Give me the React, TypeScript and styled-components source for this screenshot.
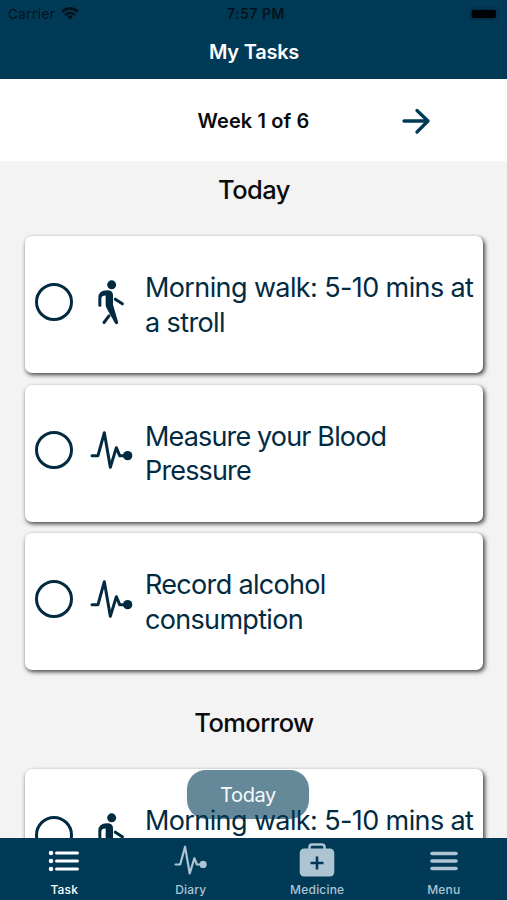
import React from "react";
import styled, { createGlobalStyle } from "styled-components";

const NAVY = "#003a57";
const INK = "#022b42";

const GlobalStyle = createGlobalStyle`
  * { box-sizing: border-box; }
  body {
    margin: 0;
    background: #f3f3f3;
    font-family: Inter, "Liberation Sans", sans-serif;
    font-feature-settings: "calt" 0;
  }
`;

const Screen = styled.div`
  display: flex;
  flex-direction: column;
  position: relative;
  width: 507px;
  height: 900px;
  overflow: hidden;
  background: #f3f3f3;
`;

const Header = styled.header`
  flex: none;
  height: 79px;
  background: ${NAVY};
`;

const StatusBar = styled.div`
  display: grid;
  grid-template-columns: 1fr auto 1fr;
  align-items: center;
  height: 27px;
  padding: 0 6px 0 8px;
  color: #06121b;
  font-size: 13.5px;
`;

const Carrier = styled.div`
  display: flex;
  align-items: center;
  gap: 6px;
  letter-spacing: 0.45px;
`;

const Clock = styled.div`
  font-size: 14px;
  font-weight: 600;
  letter-spacing: 0.5px;
  padding-left: 3px;
`;

const Battery = styled.svg`
  justify-self: end;
`;

const Title = styled.h1`
  margin: 0;
  padding-left: 1px;
  color: #fff;
  font-size: 20px;
  font-weight: 600;
  line-height: 51px;
  letter-spacing: -0.22px;
  text-align: center;
`;

const WeekBar = styled.div`
  flex: none;
  display: grid;
  grid-template-columns: 1fr auto 1fr;
  align-items: center;
  height: 82px;
  background: #fff;
`;

const WeekLabel = styled.div`
  grid-column: 2;
  padding-top: 1px;
  color: #0b0b0b;
  font-size: 20px;
  font-weight: 600;
  letter-spacing: 0.12px;
`;

const NextButton = styled.button`
  justify-self: start;
  display: flex;
  margin: 1px 0 0 91px;
  padding: 0;
  border: 0;
  background: none;
`;

const TaskArea = styled.main`
  flex: 1;
  min-height: 0;
  overflow: hidden;
  padding: 0 24px 0 25px;
`;

const DayTitle = styled.h2<{ $height: number; $line: number }>`
  height: ${(p) => p.$height}px;
  margin: 0;
  color: #0b0b0b;
  font-size: 25.5px;
  font-weight: 500;
  line-height: ${(p) => p.$line}px;
  letter-spacing: -0.55px;
  text-align: center;
`;

const CardList = styled.div`
  display: flex;
  flex-direction: column;
  gap: 11.5px;
`;

const Card = styled.article`
  display: flex;
  align-items: center;
  height: 137px;
  padding-left: 10px;
  border-radius: 7px;
  background: #fff;
  box-shadow: 1.5px 2px 4px rgba(0, 0, 0, 0.72);
`;

const Check = styled.span`
  flex: none;
  width: 38px;
  height: 38px;
  margin-bottom: 6px;
  border: 3px solid ${INK};
  border-radius: 50%;
`;

const TaskIcon = styled.svg`
  flex: none;
  margin: 0 11px 6px 17px;
`;

const TaskText = styled.p<{ $tracking: number }>`
  margin: 0;
  padding-top: 2px;
  color: ${INK};
  font-size: 27px;
  line-height: 34.4px;
  letter-spacing: ${(p) => p.$tracking}px;
  white-space: pre-line;
`;

const TodayButton = styled.button`
  position: absolute;
  left: 187px;
  top: 770px;
  width: 122px;
  height: 49px;
  padding: 0;
  border: 0;
  border-radius: 19px;
  background: rgba(0, 58, 87, 0.6);
  box-shadow: 0 1px 5px rgba(0, 0, 0, 0.06);
  color: #f6fafc;
  font: 400 20px Inter, sans-serif;
  letter-spacing: -0.4px;
`;

const TabBar = styled.nav`
  flex: none;
  display: grid;
  grid-template-columns: repeat(4, 126.5px);
  height: 62px;
  background: ${NAVY};
`;

const Tab = styled.div<{ $active?: boolean }>`
  display: flex;
  flex-direction: column;
  align-items: center;
  padding-top: 3px;
  color: ${(p) => (p.$active ? "#ffffff" : "#adc4d3")};
  font-size: 12px;
  font-weight: 500;
  line-height: 16px;
  letter-spacing: 0.2px;
  padding-left: 2px;
`;

const TabIcon = styled.svg`
  display: block;
  margin-bottom: 1px;
`;

const PulsePaths = ({ weight = 9 }: { weight?: number }) => (
  <>
    <path
      d="M276 228H294L313 159L331 263L349 204L359 228H383"
      fill="none"
      stroke="currentColor"
      strokeWidth={weight}
      strokeLinecap="round"
      strokeLinejoin="round"
    />
    <circle cx="383" cy="228" r="14" fill="currentColor" />
  </>
);

const PulseIcon = () => (
  <TaskIcon width="44" height="60" viewBox="270 121 132 180" color={INK}>
    <PulsePaths />
  </TaskIcon>
);

const WalkIcon = () => (
  <TaskIcon width="44" height="60" viewBox="15 4.5 132 180" color={INK}>
    <circle cx="80" cy="43" r="13.5" fill="currentColor" />
    <path
      d="M40 106V82Q40 59 66 59Q84 59 84 74V103L99 154Q101 161 94 161Q91 161 89 157L65 113Q62 108 62 102V75Q49 75 49 85V106Q49 109 44.500 109Q40 109 40 106Z"
      fill="currentColor"
    />
    <path d="M91 86L112 100M72 136L57 156" stroke="currentColor" strokeWidth="9" strokeLinecap="round" />
  </TaskIcon>
);

type Task = { kind: "walk" | "pulse"; text: string; tracking: number };

const WALK: Task = { kind: "walk", text: "Morning walk: 5-10 mins at\na stroll", tracking: -0.61 };
const TODAY: Task[] = [
  WALK,
  { kind: "pulse", text: "Measure your Blood\nPressure", tracking: -0.85 },
  { kind: "pulse", text: "Record alcohol\nconsumption", tracking: -0.68 },
];

const TaskCard = ({ task }: { task: Task }) => (
  <Card>
    <Check />
    {task.kind === "walk" ? <WalkIcon /> : <PulseIcon />}
    <TaskText $tracking={task.tracking}>{task.text}</TaskText>
  </Card>
);

export default function App() {
  return (
    <Screen>
      <GlobalStyle />
      <Header>
        <StatusBar>
          <Carrier>
            <span>Carrier</span>
            <svg width="18" height="13" viewBox="0 0 18 13" fill="none" stroke="currentColor" strokeWidth="2.600">
              <path d="M1.200 4.800Q9 -2 16.800 4.800M4 8Q9 3.600 14 8" />
              <path d="M6 9.500Q9 7.300 12 9.500L9 12.500Z" fill="currentColor" stroke="none" />
            </svg>
          </Carrier>
          <Clock>7:57 PM</Clock>
          <Battery width="32" height="14" viewBox="0 0 32 14">
            <rect x="0.500" y="0.700" width="28" height="12.600" rx="3.500" fill="none" stroke="#053048" />
            <rect x="2.500" y="2.700" width="24.500" height="8.600" rx="1.800" fill="#000305" />
            <path d="M30 5V9Q31.500 7 30 5" fill="#053048" />
          </Battery>
        </StatusBar>
        <Title>My Tasks</Title>
      </Header>
      <WeekBar>
        <WeekLabel>Week 1 of 6</WeekLabel>
        <NextButton aria-label="Next week">
          <svg width="30" height="28" viewBox="0 0 30 28" fill="none" stroke={NAVY} strokeWidth="3.300" strokeLinecap="round" strokeLinejoin="round">
            <path d="M3 14H27M16 3.500L27 14L16 25" />
          </svg>
        </NextButton>
      </WeekBar>
      <TaskArea>
        <DayTitle $height={75} $line={57}>Today</DayTitle>
        <CardList>
          {TODAY.map((task) => (
            <TaskCard key={task.text} task={task} />
          ))}
        </CardList>
        <DayTitle $height={99} $line={106}>Tomorrow</DayTitle>
        <CardList>
          <TaskCard task={WALK} />
        </CardList>
      </TaskArea>
      <TodayButton>Today</TodayButton>
      <TabBar>
        <Tab $active>
          <TabIcon width="34" height="40" viewBox="0 0 34 40" stroke="currentColor" strokeLinecap="round">
            <path d="M9.500 12H30.500M9.500 20H30.500M9.500 28H30.500" strokeWidth="3" />
            <path d="M4 12h.01M4 20h.01M4 28h.01" strokeWidth="4.500" />
          </TabIcon>
          Task
        </Tab>
        <Tab>
          <TabIcon width="34" height="40" viewBox="270 137 132 155">
            <PulsePaths weight={8.5} />
          </TabIcon>
          Diary
        </Tab>
        <Tab>
          <TabIcon width="36" height="40" viewBox="0 0 36 40" fill="none">
            <path d="M10.500 9V6Q10.500 3.500 13 3.500H23Q25.500 3.500 25.500 6V9" stroke="currentColor" strokeWidth="2.500" />
            <rect x="0.700" y="7.500" width="34.600" height="28" rx="4.500" fill="currentColor" />
            <path d="M18 15.500V28.500M11.500 22H24.500" stroke={NAVY} strokeWidth="2.600" />
          </TabIcon>
          Medicine
        </Tab>
        <Tab>
          <TabIcon width="34" height="40" viewBox="0 0 34 40" stroke="currentColor" strokeWidth="3.600" strokeLinecap="round">
            <path d="M5 12.500H29M5 20H29M5 27.500H29" />
          </TabIcon>
          Menu
        </Tab>
      </TabBar>
    </Screen>
  );
}
